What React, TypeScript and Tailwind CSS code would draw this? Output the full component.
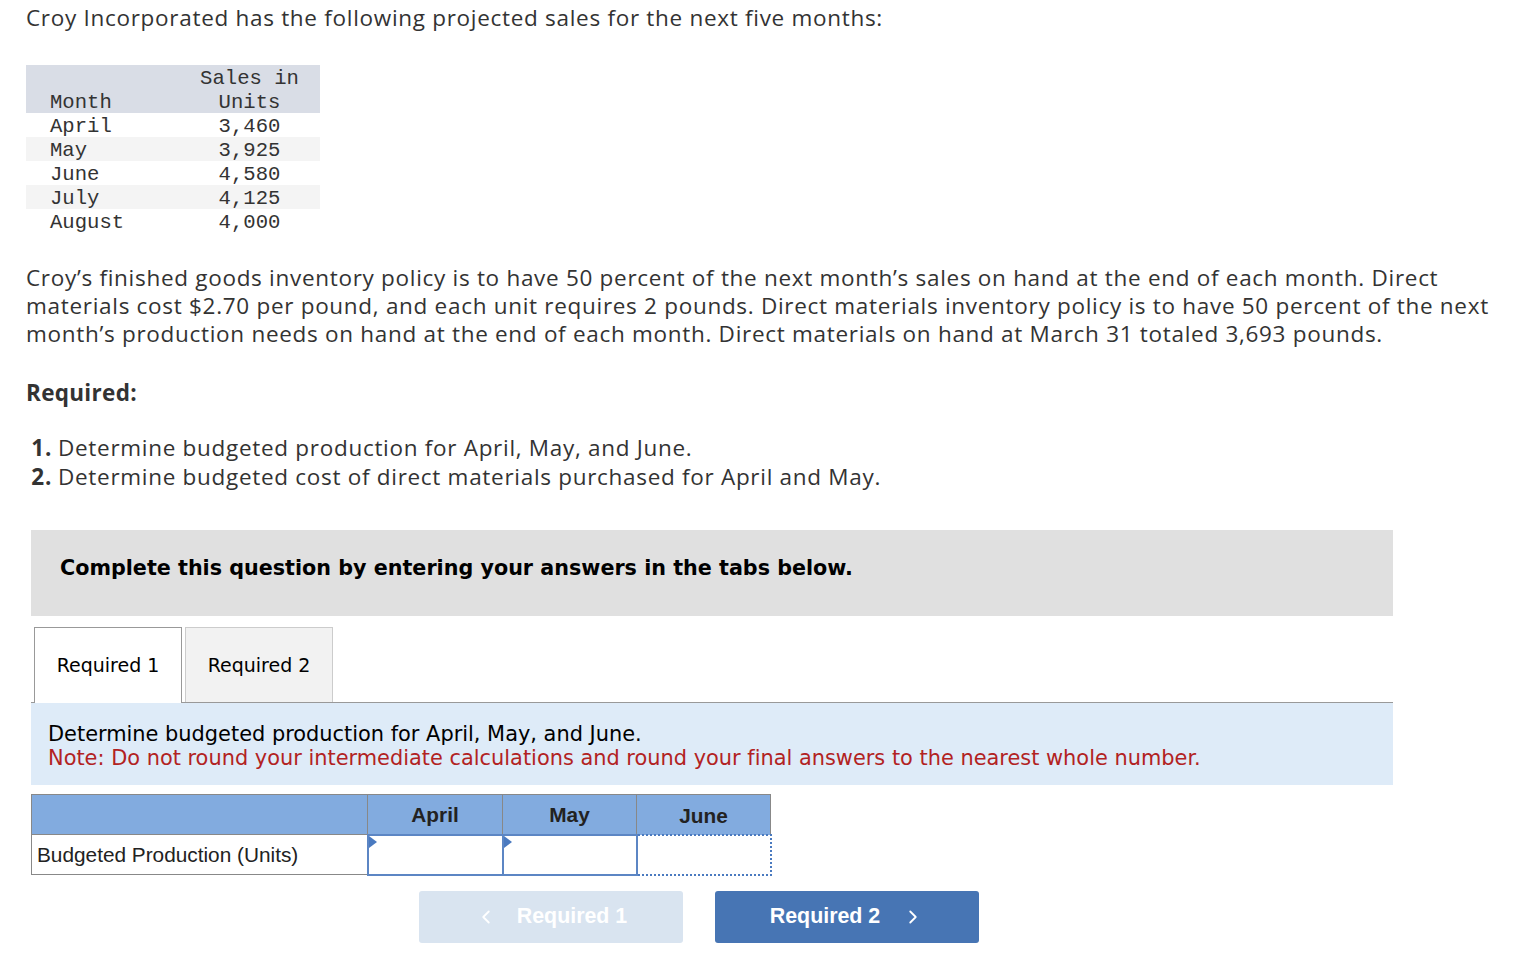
import { ChevronLeft, ChevronRight } from 'lucide-react';

const sales = [
    { month: 'April', units: '3,460' },
    { month: 'May', units: '3,925' },
    { month: 'June', units: '4,580' },
    { month: 'July', units: '4,125' },
    { month: 'August', units: '4,000' },
];

const proxima = { fontFamily: '"Open Sans", Lato, sans-serif', fontVariantLigatures: 'none' as const };
const verdana = { fontFamily: '"DejaVu Sans", Verdana, sans-serif' };
const arial = { fontFamily: '"Liberation Sans", Arial, sans-serif' };

const InputCell = ({ active }: { active?: boolean }) => {
    if (active) {
        return <td className="border-2 border-dotted border-[#4a7ac0] h-[40px] p-0 bg-white"></td>;
    }
    return (
        <td className="relative border-2 border-[#5c86c4] h-[40px] p-0 bg-white">
            <span className="absolute left-0 top-0 w-0 h-0 border-t-[6px] border-b-[6px] border-l-[8px] border-t-transparent border-b-transparent border-l-[#4a7ac0]"></span>
        </td>
    );
};

const App = () => {
    return (
        <div className="min-h-screen bg-white text-[#333] px-[26px] pt-[4px]" style={proxima}>
            <p className="text-[22.5px] leading-[28px] tracking-[0.7px]">
                Croy Incorporated has the following projected sales for the next five months:
            </p>

            <table className="mt-[33px] border-collapse text-[20.6px] leading-[24px] text-[#333]" style={{ fontFamily: '"Liberation Mono", "Courier New", monospace' }}>
                <thead>
                    <tr className="bg-[#d9dde6]">
                        <th className="w-[153px] pl-[24px] text-left font-normal align-bottom h-[48px]">
                            <div className="translate-y-[2px]">Month</div>
                        </th>
                        <th className="w-[141px] text-center font-normal align-bottom">
                            <div className="translate-y-[2px]">
                                Sales in
                                <br />
                                Units
                            </div>
                        </th>
                    </tr>
                </thead>
                <tbody>
                    {sales.map((row, i) => (
                        <tr key={row.month} className={i % 2 === 1 ? 'bg-[#f4f4f4]' : 'bg-white'}>
                            <td className="pl-[24px] h-[24px]">
                                <div className="translate-y-[2px]">{row.month}</div>
                            </td>
                            <td className="text-center">
                                <div className="translate-y-[2px]">{row.units}</div>
                            </td>
                        </tr>
                    ))}
                </tbody>
            </table>

            <div className="mt-[31px] text-[22.5px] leading-[28px] tracking-[0.7px]">
                <p className="whitespace-nowrap">Croy’s finished goods inventory policy is to have 50 percent of the next month’s sales on hand at the end of each month. Direct</p>
                <p className="whitespace-nowrap">materials cost $2.70 per pound, and each unit requires 2 pounds. Direct materials inventory policy is to have 50 percent of the next</p>
                <p className="whitespace-nowrap">month’s production needs on hand at the end of each month. Direct materials on hand at March 31 totaled 3,693 pounds.</p>
            </div>

            <p className="mt-[31px] text-[22.5px] leading-[28px] font-bold tracking-[0.3px]">Required:</p>

            <ol className="mt-[26px] text-[22.5px] leading-[29px] tracking-[0.7px]">
                <li className="flex">
                    <span className="w-[32px] text-right font-bold pr-[6px]">1.</span>
                    <span>Determine budgeted production for April, May, and June.</span>
                </li>
                <li className="flex">
                    <span className="w-[32px] text-right font-bold pr-[6px]">2.</span>
                    <span>Determine budgeted cost of direct materials purchased for April and May.</span>
                </li>
            </ol>

            <div className="ml-[5px] w-[1362px]" style={verdana}>
                <div className="mt-[39px] h-[86px] bg-[#e0e0e0] pl-[29px] pt-[24px]">
                    <p className="text-[20.7px] leading-[28px] font-bold text-black">Complete this question by entering your answers in the tabs below.</p>
                </div>

                <div className="mt-[11px] flex items-end border-b border-[#999] h-[76px]">
                    <div className="ml-[3px] w-[148px] h-[76px] bg-white border border-b-0 border-[#999] flex items-center justify-center text-[19px] text-black -mb-px relative z-10">
                        Required 1
                    </div>
                    <div className="ml-[3px] w-[148px] h-[75px] bg-[#f2f2f2] border border-b-0 border-[#ccc] flex items-center justify-center text-[19px] text-black">
                        Required 2
                    </div>
                </div>

                <div className="h-[82px] bg-[#deebf8] pl-[17px] pt-[19px] text-[20.9px] leading-[24px]">
                    <p className="text-black">Determine budgeted production for April, May, and June.</p>
                    <p className="text-[#b22222]">Note: Do not round your intermediate calculations and round your final answers to the nearest whole number.</p>
                </div>

                <table className="mt-[9px] border-collapse text-[20.8px]" style={arial}>
                    <thead>
                        <tr className="bg-[#82abdf] h-[40px]">
                            <th className="w-[336px] border border-[#888]"></th>
                            <th className="w-[135px] border border-[#888] font-bold text-[#222]">April</th>
                            <th className="w-[134px] border border-[#888] font-bold text-[#222]">May</th>
                            <th className="w-[134px] border border-[#888] font-bold text-[#222] align-top pt-[5px]">June</th>
                        </tr>
                    </thead>
                    <tbody>
                        <tr>
                            <td className="border border-[#888] h-[40px] pl-[5px] text-left text-[#222]">Budgeted Production (Units)</td>
                            <InputCell />
                            <InputCell />
                            <InputCell active />
                        </tr>
                    </tbody>
                </table>

                <div className="mt-[15px] flex gap-[32px] pl-[388px]" style={arial}>
                    <button className="w-[264px] h-[52px] rounded-[3px] bg-[#d9e4f0] text-white font-bold text-[21.4px] flex items-center justify-center gap-[20px]">
                        <ChevronLeft size={22} strokeWidth={2} />
                        <span>Required 1</span>
                    </button>
                    <button className="w-[264px] h-[52px] rounded-[3px] bg-[#4775b4] text-white font-bold text-[21.4px] flex items-center justify-center gap-[22px]">
                        <span>Required 2</span>
                        <ChevronRight size={22} strokeWidth={2} />
                    </button>
                </div>
            </div>
        </div>
    );
};

export default App;
